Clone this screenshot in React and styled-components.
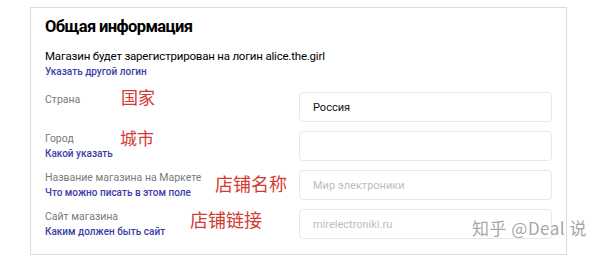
import styled, { createGlobalStyle } from 'styled-components'

const Global = createGlobalStyle`
  body {
    margin: 0;
    background: #ffffff;
    font-family: Roboto, "Noto Sans", Arial, sans-serif;
  }
`

const Page = styled.div`
  position: relative;
  width: 600px;
  height: 265px;
  padding: 7px 0 0 30px;
  box-sizing: border-box;
`

const Card = styled.section`
  width: 537px;
  box-sizing: border-box;
  border: 1px solid #dcdcdc;
  padding: 7px 14px 15px 14px;
  background: #fff;
`

const Title = styled.h2`
  margin: 0 0 9px;
  font-size: 16.5px;
  line-height: 24px;
  font-weight: 700;
  letter-spacing: -0.6px;
  color: #000;
`

const Intro = styled.p`
  margin: 0 0 13px;
  font-size: 11.5px;
  line-height: 16px;
  letter-spacing: -0.2px;
  color: #000;
`

const Link = styled.a`
  display: block;
  color: #3d3da8;
  font-size: 10px;
  font-weight: 500;
  line-height: 15px;
  letter-spacing: 0;
  text-decoration: none;
  white-space: nowrap;
`

const Rows = styled.div`
  display: flex;
  flex-direction: column;
  gap: 9px;
`

const Row = styled.div`
  display: grid;
  grid-template-columns: 1fr 253px;
  align-items: start;
`

const LabelSide = styled.div`
  position: relative;
  display: flex;
  flex-direction: column;
  min-height: 30px;
`

const Label = styled.span`
  font-size: 10.5px;
  line-height: 15px;
  color: #7a7a7a;
  white-space: nowrap;
`

const Note = styled.span`
  position: absolute;
  left: ${(p) => p.$left}px;
  top: ${(p) => p.$top}px;
  font-family: "Noto Sans CJK SC", sans-serif;
  font-size: ${(p) => p.$size}px;
  line-height: 20px;
  color: #d23a32;
  white-space: nowrap;
`

const Input = styled.div`
  height: 30px;
  box-sizing: border-box;
  border: 1px solid #e8e8e8;
  border-radius: 4px;
  padding: 0 13px;
  display: flex;
  align-items: center;
  font-size: 11px;
  color: ${(p) => (p.$placeholder ? '#bdbdbd' : '#111')};
`

const Watermark = styled.div`
  position: absolute;
  left: 472px;
  top: 217px;
  font-family: "Noto Sans CJK SC", "Noto Sans", sans-serif;
  font-size: 17px;
  line-height: 22px;
  color: rgba(135, 135, 135, 0.75);
  text-shadow: 0 0 2px #fff, 0 0 2px #fff;
  letter-spacing: 0.5px;
`

const fields = [
  { label: 'Страна', note: '国家', size: 17, left: 76, top: -5, value: 'Россия' },
  { label: 'Город', link: 'Какой указать', note: '城市', size: 17, left: 75, top: -3 },
  {
    label: 'Название магазина на Маркете',
    link: 'Что можно писать в этом поле',
    note: '店铺名称',
    size: 18,
    left: 170,
    top: 3,
    placeholder: 'Мир электроники',
  },
  {
    label: 'Сайт магазина',
    link: 'Каким должен быть сайт',
    note: '店铺链接',
    size: 18,
    left: 145,
    top: 0,
    placeholder: 'mirelectroniki.ru',
  },
]

const App = () => {
  return (
    <Page>
      <Global />
      <Card>
        <Title>Общая информация</Title>
        <Intro>
          Магазин будет зарегистрирован на логин alice.the.girl
          <Link href="#">Указать другой логин</Link>
        </Intro>
        <Rows>
          {fields.map((f) => (
            <Row key={f.label}>
              <LabelSide>
                <Label>{f.label}</Label>
                {f.link && <Link href="#">{f.link}</Link>}
                <Note $left={f.left} $top={f.top} $size={f.size}>
                  {f.note}
                </Note>
              </LabelSide>
              <Input $placeholder={!f.value}>{f.value || f.placeholder || ''}</Input>
            </Row>
          ))}
        </Rows>
      </Card>
      <Watermark>知乎 @Deal 说</Watermark>
    </Page>
  )
}

export default App
